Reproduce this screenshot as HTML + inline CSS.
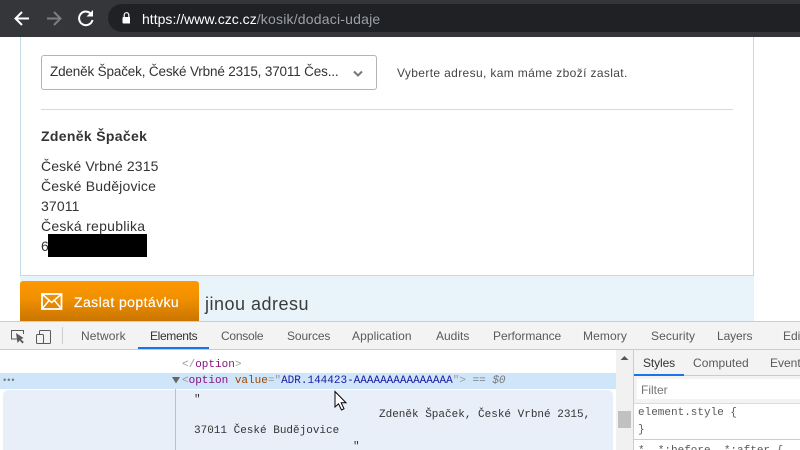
<!DOCTYPE html>
<html lang="cs"><head><meta charset="utf-8"><title>czc</title>
<style>
html,body{margin:0;padding:0;width:800px;height:450px;overflow:hidden;background:#fff}
body{position:relative;font-family:"Liberation Sans",sans-serif;color:#333}
.a{position:absolute}
.t{position:absolute;white-space:pre;line-height:20px}
.m{position:absolute;white-space:pre;font-family:"Liberation Mono",monospace;font-size:11px;line-height:16px}
.d{position:absolute;white-space:pre;font-size:12px;line-height:16px;color:#5a5a5a}
</style></head><body>
<!-- top bar -->
<div class="a" style="left:0;top:0;width:800px;height:37px;background:#35363a"></div>
<div class="a" style="left:108px;top:4px;width:720px;height:28px;border-radius:14px;background:#202124"></div>
<svg class="a" style="left:0;top:0" width="130" height="37" fill="none">
<path d="M29 18.500H16M22 12L15.500 18.500L22 25" stroke="#fff" stroke-width="2"/>
<path d="M47 18.500H60M54 12L60.500 18.500L54 25" stroke="#7c7d80" stroke-width="2"/>
<path d="M91.500 14.500A6.800 6.800 0 1 0 92.500 20" stroke="#fff" stroke-width="2"/>
<path d="M86.500 16.500H93V10Z" fill="#fff"/>
<rect x="122.500" y="17" width="8" height="6.500" rx="1" fill="#fff"/>
<path d="M124.200 17V15A2.300 2.300 0 0 1 128.800 15V17" stroke="#fff" stroke-width="1.200"/>
</svg>
<div class="t" style="left:142px;top:9px;font-size:14px;color:#fff;letter-spacing:.02px">https://www.czc.cz<span style="color:#9aa0a6;letter-spacing:.2px">/kosik/dodaci-udaje</span></div>

<!-- page -->
<div class="a" style="left:20px;top:37px;width:1px;height:239px;background:#c5dbe8"></div>
<div class="a" style="left:753px;top:37px;width:1px;height:284px;background:#c5dbe8"></div>
<div class="a" style="left:41px;top:55px;width:334px;height:33px;border:1px solid #b4b4b4;border-radius:3px;background:#fff"></div>
<div class="t" style="left:50px;top:62px;font-size:13.500px;color:#333;letter-spacing:-.16px">Zdeněk Špaček, České Vrbné 2315, 37011 Čes...</div>
<svg class="a" style="left:350px;top:68px" width="16" height="12" fill="none"><path d="M4 3.500L8 7.500L12 3.500" stroke="#777" stroke-width="2"/></svg>
<div class="t" style="left:397px;top:63px;font-size:12px;color:#444;letter-spacing:.36px">Vyberte adresu, kam máme zboží zaslat.</div>
<div class="a" style="left:41px;top:109px;width:692px;height:1px;background:#cddde5"></div>
<div class="t" style="left:41px;top:126px;font-size:14px;font-weight:bold;color:#333;letter-spacing:.33px">Zdeněk Špaček</div>
<div class="t" style="left:41px;top:156px;font-size:14px;color:#333;letter-spacing:.13px">České Vrbné 2315</div>
<div class="t" style="left:41px;top:176px;font-size:14px;color:#333;letter-spacing:.19px">České Budějovice</div>
<div class="t" style="left:41px;top:196px;font-size:14px;color:#333;letter-spacing:.13px">37011</div>
<div class="t" style="left:41px;top:216px;font-size:14px;color:#333;letter-spacing:.26px">Česká republika</div>
<div class="t" style="left:41px;top:236px;font-size:14px;color:#333">6</div>
<div class="a" style="left:48px;top:234px;width:99px;height:23px;background:#000"></div>
<div class="a" style="left:20px;top:275px;width:734px;height:46px;background:#e8f3fa;border-top:1px solid #c5dbe8;box-sizing:border-box"></div>
<div class="a" style="left:20px;top:281px;width:179px;height:40px;border-radius:3px 3px 0 0;background:linear-gradient(#fe9800 0%,#f09000 45%,#c97500 100%)"></div>
<svg class="a" style="left:41px;top:293px" width="22" height="17" fill="none" stroke="#fff" stroke-width="1.800"><rect x="1" y="1" width="19.500" height="15"/><path d="M1 1L10.700 9.500L20.500 1M1 16L8 7.500M20.500 16L13.500 7.500" stroke-width="1.500"/></svg>
<div class="t" style="left:74px;top:292px;font-size:14px;color:#fff;letter-spacing:.42px;-webkit-text-stroke:.15px #fff">Zaslat poptávku</div>
<div class="t" style="left:205px;top:294px;font-size:18px;color:#3b3b3b;letter-spacing:.5px">jinou adresu</div>

<!-- devtools -->
<div class="a" style="left:0;top:321px;width:800px;height:129px;background:#fff"></div>
<div class="a" style="left:0;top:321px;width:800px;height:29px;background:#f3f3f3;border-top:1px solid #ccc;border-bottom:1px solid #ccc;box-sizing:border-box"></div>
<svg class="a" style="left:0;top:322px" width="70" height="27" fill="none">
<path d="M17.500 17H11.500V8.500H23.500V12" stroke="#5a5a5a" stroke-width="1"/>
<path d="M16 11L17.500 21L19.700 18.500L22.500 21.500L23.800 20L21 17.300L23.500 16Z" fill="#5a5a5a"/>
<rect x="39.500" y="8.500" width="11" height="13" rx="1" stroke="#5a5a5a"/>
<rect x="36.500" y="12.500" width="7" height="9" rx="1" fill="#f3f3f3" stroke="#5a5a5a"/>
<path d="M62.500 5V22" stroke="#ccc"/>
</svg>
<div class="d" style="left:81px;top:328px;letter-spacing:.1px">Network</div>
<div class="d" style="left:150px;top:328px;color:#333;letter-spacing:-.35px">Elements</div>
<div class="a" style="left:138px;top:347px;width:71px;height:2px;background:#1a73e8"></div>
<div class="d" style="left:221px;top:328px;letter-spacing:-.25px">Console</div>
<div class="d" style="left:287px;top:328px;letter-spacing:-.1px">Sources</div>
<div class="d" style="left:352px;top:328px;letter-spacing:.08px">Application</div>
<div class="d" style="left:436px;top:328px">Audits</div>
<div class="d" style="left:493px;top:328px;letter-spacing:-.05px">Performance</div>
<div class="d" style="left:583px;top:328px;letter-spacing:.1px">Memory</div>
<div class="d" style="left:651px;top:328px;letter-spacing:.1px">Security</div>
<div class="d" style="left:717px;top:328px;letter-spacing:-.1px">Layers</div>
<div class="d" style="left:783px;top:328px">Edit</div>

<!-- elements panel -->
<div class="m" style="left:182px;top:357px"><span style="color:#999">&lt;/</span><span style="color:#881280">option</span><span style="color:#999">&gt;</span></div>
<div class="a" style="left:0;top:373px;width:616px;height:16px;background:#cfe5fa"></div>
<div class="m" style="left:2px;top:373px;color:#777;font-size:9px;letter-spacing:-1.300px">•••</div>
<svg class="a" style="left:171px;top:376px" width="10" height="9"><path d="M1 1H9L5 7.500Z" fill="#666"/></svg>
<div class="m" style="left:182px;top:373px"><span style="color:#999">&lt;</span><span style="color:#881280">option</span> <span style="color:#994500">value</span><span style="color:#999">=</span><span style="color:#999">"</span><span style="color:#1a1aa6">ADR.144423-AAAAAAAAAAAAAAA</span><span style="color:#999">"&gt;</span><span style="color:#777"> == <i>$0</i></span></div>
<div class="a" style="left:3px;top:390px;width:610px;height:60px;background:#e8eff9;border-radius:5px 5px 0 0"></div>
<div class="a" style="left:175px;top:389px;width:1px;height:61px;background:#a8c4ea"></div>
<div class="m" style="left:194px;top:392px;color:#333">"</div>
<div class="m" style="left:379px;top:407px;color:#333">Zdeněk Špaček, České Vrbné 2315,</div>
<div class="m" style="left:194px;top:423px;color:#333">37011 České Budějovice</div>
<div class="m" style="left:353px;top:439px;color:#333">"</div>

<!-- scrollbar -->
<div class="a" style="left:616px;top:350px;width:17px;height:100px;background:#f1f1f1"></div>
<svg class="a" style="left:616px;top:352px" width="17" height="12"><path d="M4.500 8L8.500 4L12.500 8Z" fill="#555"/></svg>
<div class="a" style="left:618px;top:411px;width:13px;height:17px;background:#c1c1c1"></div>

<!-- styles panel -->
<div class="a" style="left:633px;top:350px;width:1px;height:100px;background:#ccc"></div>
<div class="a" style="left:634px;top:350px;width:166px;height:26px;background:#f3f3f3;border-bottom:1px solid #ccc;box-sizing:border-box"></div>
<div class="d" style="left:643px;top:355px;color:#333;letter-spacing:-.1px">Styles</div>
<div class="a" style="left:634px;top:374px;width:50px;height:2px;background:#1a73e8"></div>
<div class="d" style="left:693px;top:355px;letter-spacing:.05px">Computed</div>
<div class="d" style="left:770px;top:355px">Event</div>
<div class="a" style="left:634px;top:376px;width:166px;height:28px;background:#f3f3f3"></div>
<div class="a" style="left:637px;top:379px;width:163px;height:20px;background:#fff"></div>
<div class="d" style="left:641px;top:382px;color:#757575">Filter</div>
<div class="a" style="left:634px;top:403px;width:166px;height:1px;background:#ddd"></div>
<div class="m" style="left:638px;top:405px;color:#5a5a5a">element.style {</div>
<div class="m" style="left:638px;top:422px;color:#5a5a5a">}</div>
<div class="a" style="left:634px;top:439px;width:166px;height:1px;background:#ccc"></div>
<div class="m" style="left:638px;top:443px;color:#5a5a5a">*, *:before, *:after {</div>

<!-- cursor -->
<svg class="a" style="left:333px;top:390px" width="16" height="22"><path d="M2 1.500V17L5.500 13.800L8.500 20L11 18.800L8.200 12.800H13Z" fill="#fff" stroke="#000" stroke-width="1"/></svg>
</body></html>
